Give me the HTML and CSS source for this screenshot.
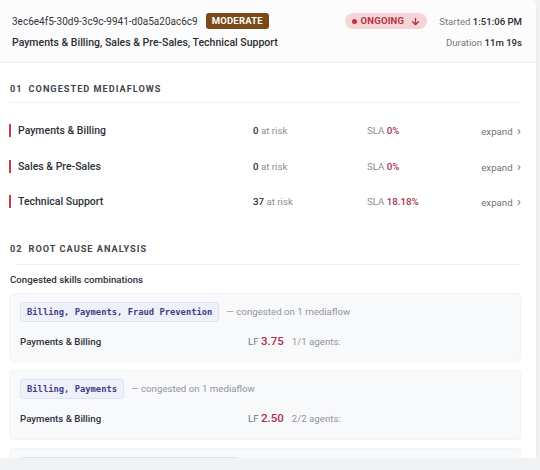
FILE: index.html
```html
<!DOCTYPE html>
<html lang="en">
<head>
    <meta charset="UTF-8">
    <meta name="viewport" content="width=device-width, initial-scale=1.0">
    <title>Incident detail</title>
    <link rel="stylesheet" href="styles.css">
</head>
<body>
    <div class="panel">
        <!-- Incident header -->
        <header class="head">
            <div class="head-left">
                <div class="id-line">
                    <span class="incident-id">3ec6e4f5-30d9-3c9c-9941-d0a5a20ac6c9</span>
                    <span class="badge-moderate">MODERATE</span>
                </div>
                <div class="flows">Payments &amp; Billing, Sales &amp; Pre-Sales, Technical Support</div>
            </div>
            <div class="head-right">
                <div class="status-line">
                    <span class="pill-ongoing"><span class="dot"></span>ONGOING
                        <svg class="arrow" viewBox="0 0 10 10" width="9" height="9"><path d="M5 1.5V8.5M1.8 5.3L5 8.5L8.2 5.3" fill="none" stroke="currentColor" stroke-width="1.5" stroke-linecap="round" stroke-linejoin="round"/></svg>
                    </span>
                    <span class="meta">Started <b>1:51:06 PM</b></span>
                </div>
                <div class="meta">Duration <b>11m 19s</b></div>
            </div>
        </header>

        <!-- Section 01 -->
        <section class="section">
            <h2 class="section-title"><span class="num">01</span>CONGESTED MEDIAFLOWS</h2>
            <div class="flow-list">
                <div class="flow-row">
                    <span class="flow-name">Payments &amp; Billing</span>
                    <span class="risk"><b>0</b> at risk</span>
                    <span class="sla">SLA <b>0%</b></span>
                    <span class="expand">expand <span class="chev">&#8250;</span></span>
                </div>
                <div class="flow-row">
                    <span class="flow-name">Sales &amp; Pre-Sales</span>
                    <span class="risk"><b>0</b> at risk</span>
                    <span class="sla">SLA <b>0%</b></span>
                    <span class="expand">expand <span class="chev">&#8250;</span></span>
                </div>
                <div class="flow-row">
                    <span class="flow-name">Technical Support</span>
                    <span class="risk"><b>37</b> at risk</span>
                    <span class="sla">SLA <b>18.18%</b></span>
                    <span class="expand">expand <span class="chev">&#8250;</span></span>
                </div>
            </div>
        </section>

        <!-- Section 02 -->
        <section class="section">
            <h2 class="section-title rca"><span class="num">02</span>ROOT CAUSE ANALYSIS</h2>
            <div class="sub-title">Congested skills combinations</div>

            <div class="combo">
                <div class="combo-head">
                    <span class="skills">Billing, Payments, Fraud Prevention</span>
                    <span class="note">— congested on 1 mediaflow</span>
                </div>
                <div class="combo-row">
                    <span class="combo-flow">Payments &amp; Billing</span>
                    <span class="lf">LF <b>3.75</b></span>
                    <span class="agents">1/1 agents:</span>
                </div>
            </div>

            <div class="combo">
                <div class="combo-head">
                    <span class="skills">Billing, Payments</span>
                    <span class="note">— congested on 1 mediaflow</span>
                </div>
                <div class="combo-row">
                    <span class="combo-flow">Payments &amp; Billing</span>
                    <span class="lf">LF <b>2.50</b></span>
                    <span class="agents">2/2 agents:</span>
                </div>
            </div>

            <div class="combo">
                <div class="combo-head">
                    <span class="skills wide">&nbsp;</span>
                </div>
            </div>
        </section>
    </div>
</body>
</html>
```

FILE: styles.css
```css
body {
    margin: 0;
    background: #f1f2f4;
    font-family: Roboto, "Liberation Sans", sans-serif;
    color: #2b2d33;
}

.panel {
    width: 537px;
    height: 458px;
    overflow: hidden;
    background: #fff;
    border-right: 1px solid #ececef;
    border-top-right-radius: 6px;
    box-sizing: border-box;
}

/* header */
.head {
    display: flex;
    justify-content: space-between;
    padding: 13px 14px 0 12px;
    height: 63px;
    box-sizing: border-box;
    background: #fcfcfd;
    border-bottom: 1px solid #efeff2;
}

.id-line {
    display: flex;
    align-items: center;
    gap: 8px;
    height: 16px;
}

.incident-id {
    font-size: 10px;
    color: #33353b;
}

.badge-moderate {
    background: #7a4a17;
    color: #fff;
    font-size: 9.5px;
    font-weight: 700;
    line-height: 16px;
    padding: 0 6px;
    border-radius: 3px;
    letter-spacing: 0.2px;
}

.flows {
    margin-top: 7px;
    font-size: 10.5px;
    font-weight: 500;
    color: #2b2d33;
}

.head-right {
    display: flex;
    flex-direction: column;
    align-items: flex-end;
}

.status-line {
    display: flex;
    align-items: center;
    gap: 12px;
    height: 16px;
}

.pill-ongoing {
    display: flex;
    align-items: center;
    gap: 4px;
    background: #f6d5d8;
    color: #b8313f;
    font-size: 9.5px;
    font-weight: 700;
    line-height: 16px;
    padding: 0 7px;
    border-radius: 8px;
    letter-spacing: 0.2px;
}

.pill-ongoing .dot {
    width: 5px;
    height: 5px;
    border-radius: 50%;
    background: #c42f3e;
}

.pill-ongoing .arrow {
    margin-left: 3px;
}

.meta {
    font-size: 9.6px;
    color: #777a82;
}

.head-right > .meta {
    margin-top: 8px;
}

.meta b {
    font-weight: 500;
    color: #2b2d33;
}

/* sections */
.section {
    padding: 0 15px 0 9px;
}

.section-title {
    margin: 0;
    padding: 20px 0 8px 1px;
    font-size: 9.2px;
    line-height: 11px;
    font-weight: 700;
    letter-spacing: 1px;
    color: #43454c;
    border-bottom: 1px solid #f0f0f3;
}

.section-title .num {
    margin-right: 6px;
}

/* the second divider starts a little further in */
.section-title.rca {
    padding-top: 23px;
    padding-bottom: 11px;
    border-bottom: 0;
    background: linear-gradient(#f0f0f3, #f0f0f3) no-repeat 6px 100% / calc(100% - 6px) 1px;
}

.flow-list {
    padding-top: 10px;
}

.flow-row {
    display: grid;
    grid-template-columns: 244px 114px 1fr auto;
    align-items: center;
    height: 35.5px;
    font-size: 9.7px;
    color: #8a8d94;
}

.flow-name {
    font-size: 10.5px;
    font-weight: 500;
    color: #2f3137;
    border-left: 2px solid #c73b4c;
    padding-left: 7px;
    line-height: 13px;
}

.risk b {
    font-weight: 500;
    color: #2f3137;
}

.sla b {
    font-weight: 500;
    color: #a8314a;
}

.expand {
    white-space: nowrap;
    color: #6f727a;
}

.chev {
    font-size: 13px;
    margin-left: 2px;
}

.sub-title {
    font-size: 9.7px;
    line-height: 12px;
    font-weight: 500;
    color: #2f3137;
    padding: 9px 0 7px 1px;
}

.combo {
    background: #f8f9fb;
    border: 1px solid #f3f4f7;
    border-radius: 4px;
    padding: 8px 10px 0;
    margin-bottom: 8px;
    height: 69px;
    box-sizing: border-box;
}

.combo + .combo {
    height: 70px;
}

.combo-head {
    display: flex;
    align-items: center;
    gap: 7px;
}

.skills {
    font-family: "DejaVu Sans Mono", "Liberation Mono", monospace;
    font-size: 8.8px;
    font-weight: 700;
    line-height: 12px;
    color: #3d3f86;
    background: #eef0fa;
    border: 1px solid #dfe2f3;
    border-radius: 3px;
    padding: 3px 6px;
}

.skills.wide {
    width: 220px;
    box-sizing: border-box;
}

.note {
    font-size: 9.7px;
    color: #92959c;
}

.combo-row {
    display: grid;
    grid-template-columns: 228px auto 1fr;
    align-items: baseline;
    margin-top: 12px;
    font-size: 9.7px;
}

.combo-flow {
    font-weight: 500;
    color: #2f3137;
}

.lf {
    color: #777a82;
    margin-right: 8px;
}

.lf b {
    font-size: 11.5px;
    font-weight: 500;
    color: #a8314a;
}

.agents {
    color: #92959c;
}
```
